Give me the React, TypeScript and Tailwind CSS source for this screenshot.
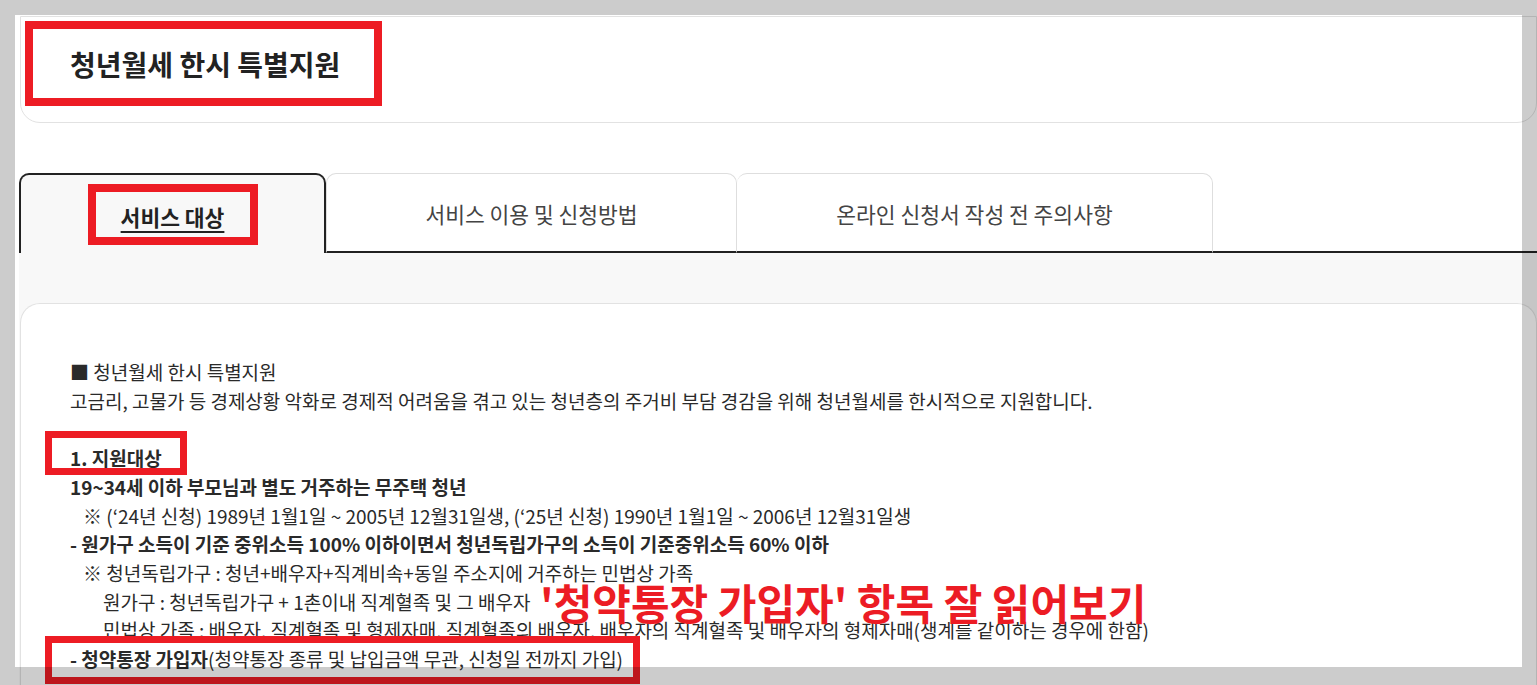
import React from 'react';

// Red highlight boxes drawn over the captured page
const RED = 'border-[#ed1c24]';

function Overlay() {
  // the grey frame around the capture is a dark translucent wash
  return (
    <>
      <div className="absolute left-0 right-0 top-0 h-[15px] bg-black/20" />
      <div className="absolute left-0 top-[15px] h-[652px] w-[15px] bg-black/20" />
      <div className="absolute left-[1522px] top-[15px] h-[652px] w-[15px] bg-black/20" />
      <div className="absolute bottom-0 left-0 right-0 top-[667px] bg-black/20" />
    </>
  );
}

export default function App() {
  return (
    <div className="relative h-[685px] w-[1537px] overflow-hidden bg-white font-['Noto_Sans_CJK_KR','Noto_Sans',sans-serif] text-[#222]">
      {/* Title card */}
      <div className="ml-[20px] mt-[16px] h-[107px] rounded-b-[20px] border border-[#e2e2e2] pl-[4px] pt-[4px]">
        <div className={`flex h-[85px] w-[357px] items-center border-8 ${RED} pl-[37px]`}>
          <h1 className="text-[28px] font-bold leading-none text-[#222]">청년월세 한시 특별지원</h1>
        </div>
      </div>

      {/* Tabs */}
      <div className="ml-[19px] mt-[50px] flex h-[80px]">
        <div className="flex w-[307px] items-center justify-center rounded-t-[10px] border-2 border-b-0 border-[#222] bg-[#f8f8f8]">
          <div className={`flex h-[61px] w-[170px] items-center justify-center border-8 ${RED} pt-[6px]`}>
            <span className="text-[21.5px] font-bold leading-none text-[#222] underline decoration-[1.5px] underline-offset-[5px]">
              서비스 대상
            </span>
          </div>
        </div>
        <div className="flex w-[411px] items-center justify-center rounded-t-[10px] border border-b-2 border-[#dedede] border-b-[#222] bg-white pt-[4px] text-[21.5px] text-[#444]">
          서비스 이용 및 신청방법
        </div>
        <div className="flex w-[476px] items-center justify-center rounded-t-[10px] border border-l-0 border-b-2 border-[#dedede] border-b-[#222] bg-white pt-[4px] text-[21.5px] text-[#444]">
          온라인 신청서 작성 전 주의사항
        </div>
        <div className="flex-1 border-b-2 border-[#222]" />
      </div>

      {/* Content */}
      <div className="ml-[19px] bg-[#f8f8f8] pt-[50px]">
        <div className="ml-[1px] h-[400px] rounded-t-[20px] border border-b-0 border-[#e2e2e2] bg-white pl-[49px] pt-[54px] text-[19px] leading-[28.7px] text-[#2a2a2a]">
          <p>■ 청년월세 한시 특별지원</p>
          <p>고금리, 고물가 등 경제상황 악화로 경제적 어려움을 겪고 있는 청년층의 주거비 부담 경감을 위해 청년월세를 한시적으로 지원합니다.</p>
          <p>&nbsp;</p>
          <p className="relative font-bold">
            1. 지원대상
            <span className={`absolute -left-[25px] -top-[13px] h-[44px] w-[142px] border-[7px] ${RED}`} />
          </p>
          <p className="font-semibold">19~34세 이하 부모님과 별도 거주하는 무주택 청년</p>
          <p className="pl-[13px]">※ (‘24년 신청) 1989년 1월1일 ~ 2005년 12월31일생, (‘25년 신청) 1990년 1월1일 ~ 2006년 12월31일생</p>
          <p className="font-semibold">- 원가구 소득이 기준 중위소득 100% 이하이면서 청년독립가구의 소득이 기준중위소득 60% 이하</p>
          <p className="pl-[13px]">※ 청년독립가구 : 청년+배우자+직계비속+동일 주소지에 거주하는 민법상 가족</p>
          <p className="relative pl-[33px]">
            원가구 : 청년독립가구 + 1촌이내 직계혈족 및 그 배우자
            <span className="absolute left-[470px] top-[-7px] whitespace-nowrap text-[42px] font-bold leading-none text-[#ec1c24]">
              '청약통장 가입자' 항목 잘 읽어보기
            </span>
          </p>
          <p className="pl-[33px]">민법상 가족 : 배우자, 직계혈족 및 형제자매, 직계혈족의 배우자, 배우자의 직계혈족 및 배우자의 형제자매(생계를 같이하는 경우에 한함)</p>
          <p className="relative">
            <span className="font-semibold">- 청약통장 가입자</span>(청약통장 종류 및 납입금액 무관, 신청일 전까지 가입)
            <span className={`absolute -left-[25px] -top-[9px] h-[48px] w-[595px] border-[7px] ${RED}`} />
          </p>
        </div>
      </div>

      <Overlay />
    </div>
  );
}
